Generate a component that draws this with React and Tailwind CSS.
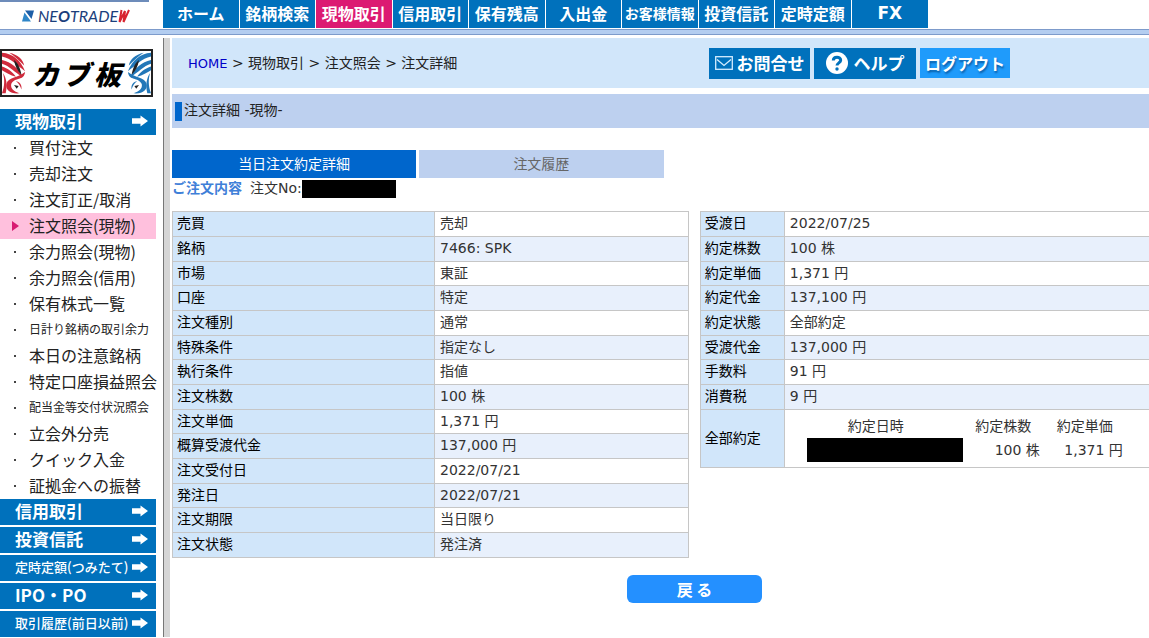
// App.jsx
const topNav = [
  "ホーム",
  "銘柄検索",
  "現物取引",
  "信用取引",
  "保有残高",
  "入出金",
  "お客様情報",
  "投資信託",
  "定時定額",
  "FX",
];

const sideItems = [
  { label: "買付注文" },
  { label: "売却注文" },
  { label: "注文訂正/取消" },
  { label: "注文照会(現物)", active: true },
  { label: "余力照会(現物)" },
  { label: "余力照会(信用)" },
  { label: "保有株式一覧" },
  { label: "日計り銘柄の取引余力", small: true },
  { label: "本日の注意銘柄" },
  { label: "特定口座損益照会" },
  { label: "配当金等交付状況照会", small: true },
  { label: "立会外分売" },
  { label: "クイック入金" },
  { label: "証拠金への振替" },
];

const sideSections = [
  { label: "信用取引" },
  { label: "投資信託" },
  { label: "定時定額(つみたて)", small: true },
  { label: "IPO・PO" },
  { label: "取引履歴(前日以前)", small: true },
];

const orderRows = [
  ["売買", "売却"],
  ["銘柄", "7466: SPK"],
  ["市場", "東証"],
  ["口座", "特定"],
  ["注文種別", "通常"],
  ["特殊条件", "指定なし"],
  ["執行条件", "指値"],
  ["注文株数", "100 株"],
  ["注文単価", "1,371 円"],
  ["概算受渡代金", "137,000 円"],
  ["注文受付日", "2022/07/21"],
  ["発注日", "2022/07/21"],
  ["注文期限", "当日限り"],
  ["注文状態", "発注済"],
];

const execRows = [
  ["受渡日", "2022/07/25"],
  ["約定株数", "100 株"],
  ["約定単価", "1,371 円"],
  ["約定代金", "137,100 円"],
  ["約定状態", "全部約定"],
  ["受渡代金", "137,000 円"],
  ["手数料", "91 円"],
  ["消費税", "9 円"],
];

function Logo() {
  return (
    <a href="#" aria-label="NEOTRADE W" className="flex items-center pl-[22px] pt-0.5">
      <svg viewBox="0 0 12 12" className="w-3 h-3 mr-1 shrink-0">
        <path d="M3 0.5h9L9.5 9z" fill="#1d5fa8" />
        <path d="M2.5 2.5L0 11.5h9z" fill="#2f86c8" />
        <path d="M2.8 1.5L9.3 10.5" stroke="#fff" strokeWidth="0.8" />
      </svg>
      <span className="font-['Lato','Noto_Sans_CJK_JP',sans-serif] italic text-[16px] leading-6 text-[#1c3f7c]">
        NE<span className="font-bold">O</span>TRADE
      </span>
      <svg viewBox="0 0 12 14" className="w-3 h-3.5 shrink-0" fill="none" stroke="#d8232f" strokeWidth="2">
        <path d="M3.5 1L1.5 13L7 2L5.5 13L11 1" />
      </svg>
    </a>
  );
}

// Kabuki-style face paint, drawn for the left edge of the banner.
function FacePaint({ color, className }) {
  return (
    <svg viewBox="0 0 26 44" className={className} fill="none">
      <path d="M0 0C12 1 20 8 25 20C17 14 10 6 0 4z" fill={color} />
      <path d="M8 0C17 2 23 7 24 14C18 8 14 4 8 0z" fill={color} />
      <path d="M0 8C10 10 18 17 22 26C14 22 8 14 0 12z" fill={color} />
      <path d="M0 15C6 17 12 21 15 26C9 25 4 21 0 19z" fill={color} />
      <path d="M25 21C24 31 14 26 10 34C9 39 13 42 19 44C9 45 3 40 5 33C7 27 18 27 25 21z" fill={color} />
      <path d="M1 22C5 28 6 35 4 44H0C3 36 3 29 1 22z" fill={color} />
      <path d="M15 31C19 31 22 35 21 40C20 36 18 33 15 31z" fill={color} />
      <path d="M13 8C18 12 20 18 21 24C17 20 14 15 13 8z" fill="#222" />
      <path d="M13 35l5 1l-2 3z" fill="#222" />
    </svg>
  );
}

function ArrowIcon() {
  return (
    <svg viewBox="0 0 16 12" className="w-4 h-3 shrink-0" fill="#fff">
      <path d="M0 3.2h8.5V0.5L16 6L8.5 11.5V8.8H0z" />
    </svg>
  );
}

function MailIcon() {
  return (
    <svg viewBox="0 0 18 14" className="w-[18px] h-[14px]" fill="none" stroke="#d5edff" strokeWidth="1.3">
      <rect x="0.7" y="0.7" width="16.6" height="12.6" />
      <path d="M2 3.5L9 9.5L16 3.5" />
    </svg>
  );
}

function HelpIcon() {
  return (
    <svg viewBox="0 0 22 22" className="w-[22px] h-[22px]" fill="none">
      <circle cx="11" cy="11" r="11" fill="#fff" />
      <path d="M7.3 8.5C7.3 4.2 14.7 4.2 14.7 8.3C14.7 10.8 11 11 11 13.6" stroke="#0071bc" strokeWidth="3" />
      <circle cx="11" cy="17" r="1.7" fill="#0071bc" />
    </svg>
  );
}

function SideHeader({ label, small }) {
  return (
    <a href="#" className="h-[26px] pl-[15px] pr-2 pb-0.5 flex items-center justify-between bg-[#0071bc] text-white whitespace-nowrap">
      <span className={small ? "text-[13px] font-medium" : "text-[17px] font-bold"}>{label}</span>
      <ArrowIcon />
    </a>
  );
}

function Sidebar() {
  return (
    <aside className="w-[156px] shrink-0 pt-[11px]">
      <a href="#" className="relative w-[153px] h-12 border-2 border-[#222] bg-white flex items-center justify-center">
        <FacePaint color="#cf2a3c" className="absolute left-0 top-0 w-6 h-11" />
        <span className="flex gap-1 text-[27px] leading-none font-black italic text-black">
          <span>カ</span>
          <span>ブ</span>
          <span>板</span>
        </span>
        <FacePaint color="#2277b8" className="absolute right-0 top-0 w-6 h-11 -scale-x-100" />
      </a>

      <nav className="mt-3">
        <SideHeader label="現物取引" />
        <ul>
          {sideItems.map((item) => (
            <li key={item.label}>
              <a
                href="#"
                className={`h-[26px] flex items-center whitespace-nowrap text-[#222] ${item.active ? "bg-[#ffc0dd]" : ""}`}
              >
                <span className="w-[29px] pl-3 shrink-0">
                  {item.active ? (
                    <svg viewBox="0 0 7 10" className="w-[7px] h-[10px]" fill="#d81b72">
                      <path d="M0 0L7 5L0 10z" />
                    </svg>
                  ) : (
                    <span className="block w-0.5 h-0.5 ml-0.5 bg-[#444]" />
                  )}
                </span>
                <span className={`pb-0.5 ${item.small ? "text-[12px]" : "text-[16px]"}`}>{item.label}</span>
              </a>
            </li>
          ))}
        </ul>
        <div className="flex flex-col gap-0.5">
          {sideSections.map((s) => (
            <SideHeader key={s.label} label={s.label} small={s.small} />
          ))}
        </div>
      </nav>
    </aside>
  );
}

// Every third row is one pixel shorter.
function DetailRow({ label, value, index, labelClass, open }) {
  return (
    <tr className={`${index % 3 === 2 ? "h-6" : "h-[25px]"} ${index % 2 ? "bg-[#e8f0fc]" : "bg-white"}`}>
      <th scope="row" className={`border border-[#c6c6c6] bg-[#d1e6fa] px-1 pt-0 pb-0.5 text-left font-normal text-black ${labelClass}`}>
        {label}
      </th>
      <td className={`border border-[#c6c6c6] px-[5px] pt-0 pb-0.5 ${open ? "border-r-0" : ""}`}>{value}</td>
    </tr>
  );
}

export default function App() {
  return (
    <div className="min-h-screen overflow-hidden bg-white text-[14px] leading-5 text-[#333] font-['DejaVu_Sans','Noto_Sans_CJK_JP',sans-serif]">
      <header>
        <div className="flex h-[29px]">
          <div className="w-[163px] shrink-0">
            <div className="w-[149px] h-0.5 bg-[#6d8cba]" />
            <Logo />
          </div>
          <nav className="w-[765px] h-7 grid grid-cols-10 font-['Noto_Sans_CJK_JP',sans-serif]">
            {topNav.map((label) => (
              <a
                key={label}
                href="#"
                className={`pb-0.5 flex items-center justify-center border-r border-white last:border-r-0 font-bold text-white whitespace-nowrap ${
                  label === "現物取引" ? "bg-[#dc1a72]" : "bg-[#0071bc]"
                } ${
                  label === "お客様情報" ? "text-[14px]" : label === "FX" ? "text-[17px] font-['DejaVu_Sans',sans-serif]" : "text-[16px]"
                }`}
              >
                {label}
              </a>
            ))}
          </nav>
        </div>
        <div className="h-1.5 border-y border-[#7d9bcb] bg-[#b3cdf0]" />
      </header>

      <div className="flex pt-[3px]">
        <div className="font-['Noto_Sans_CJK_JP',sans-serif]">
          <Sidebar />
        </div>
        <div className="ml-[7px] mr-0.5 w-[7px] shrink-0 border-l border-[#777] bg-[#d6d6d6]" />

        <main className="flex-1 min-w-0">
          <div className="h-[50px] flex items-center bg-[#d1e6fa] pl-4">
            <p className="whitespace-nowrap text-[#222]">
              <a href="#" className="text-[13px] text-[#0000c8]">HOME</a> &gt; 現物取引 &gt; 注文照会 &gt; 注文詳細
            </p>
            <div className="ml-auto mr-[139px] flex items-start gap-1 font-['Noto_Sans_CJK_JP',sans-serif] text-[17px] font-bold text-white whitespace-nowrap">
              <button type="button" className="w-[101px] h-[31px] flex items-center justify-center gap-1 bg-[#0071bc]">
                <MailIcon />
                お問合せ
              </button>
              <button type="button" className="w-[102px] h-[31px] flex items-center justify-center gap-1.5 bg-[#0071bc]">
                <HelpIcon />
                ヘルプ
              </button>
              <button type="button" className="w-[90px] h-[30px] bg-[#1f9bfb] text-[16px] [text-shadow:1px_2px_2px_#0b5fa8]">
                ログアウト
              </button>
            </div>
          </div>

          <div className="mt-1.5 h-[34px] flex items-center bg-[#bdd0ef] pl-[3px]">
            <span className="w-[7px] h-[19px] mr-0.5 bg-[#0066cc]" />
            <h1 className="pb-0.5 text-[#222]">注文詳細 -現物-</h1>
          </div>

          <div className="mt-[22px] flex gap-[3px]">
            <button type="button" className="w-1/4 h-7 bg-[#0066cc] text-white">当日注文約定詳細</button>
            <button type="button" className="w-1/4 h-7 bg-[#bdd0ef] text-[#666]">注文履歴</button>
          </div>

          <div className="h-8 flex items-start">
            <h2 className="w-[78px] font-bold text-[#3f80d8]">ご注文内容</h2>
            <span>注文No:</span>
            <span className="mt-0.5 w-[94px] h-[18px] bg-black" />
          </div>

          <div className="mt-px flex items-start gap-[11px]">
            <table className="w-[52.9%] shrink-0 border-collapse">
              <tbody>
                {orderRows.map(([label, value], i) => (
                  <DetailRow key={label} label={label} value={value} index={i} labelClass="w-[262px]" />
                ))}
              </tbody>
            </table>

            <table className="flex-1 w-full border-collapse">
              <tbody>
                {execRows.map(([label, value], i) => (
                  <DetailRow key={label} label={label} value={value} index={i} labelClass="w-[84px]" open />
                ))}
                <tr className="h-[58px]">
                  <th scope="row" className="border border-[#c6c6c6] bg-[#d1e6fa] px-1 pt-0 pb-0.5 text-left font-normal text-black">
                    全部約定
                  </th>
                  <td className="border border-r-0 border-[#c6c6c6] p-0 pb-0.5">
                    <table className="whitespace-nowrap">
                      <thead>
                        <tr className="h-6">
                          <th scope="col" className="w-[182px] p-0 font-normal">約定日時</th>
                          <th scope="col" className="w-[73px] p-0 font-normal">約定株数</th>
                          <th scope="col" className="w-[83px] p-0 pl-[7px] font-normal">約定単価</th>
                        </tr>
                      </thead>
                      <tbody>
                        <tr>
                          <td className="p-0 pr-1">
                            <div className="ml-auto w-[156px] h-6 bg-black" />
                          </td>
                          <td className="p-0 text-right">100 株</td>
                          <td className="p-0 text-right">1,371 円</td>
                        </tr>
                      </tbody>
                    </table>
                  </td>
                </tr>
              </tbody>
            </table>
          </div>

          <div className="mt-[17px] pl-[455px]">
            <button
              type="button"
              className="w-[135px] h-7 rounded-md bg-[#2490ff] font-['Noto_Sans_CJK_JP',sans-serif] text-[16px] font-bold text-white"
            >
              戻 る
            </button>
          </div>
        </main>
      </div>
    </div>
  );
}
